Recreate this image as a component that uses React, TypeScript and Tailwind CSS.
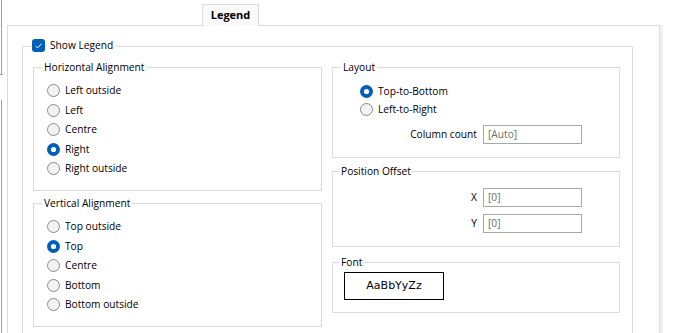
import React from "react";

const Radio = ({ checked }: { checked?: boolean }) =>
  checked ? (
    <svg width="13" height="13" viewBox="0 0 13 13" className="shrink-0">
      <circle cx="6.5" cy="6.5" r="6.5" fill="#005fb8" />
      <circle cx="6.5" cy="6.5" r="2.6" fill="#ffffff" />
    </svg>
  ) : (
    <svg width="13" height="13" viewBox="0 0 13 13" className="shrink-0">
      <circle cx="6.5" cy="6.5" r="6" fill="#f3f3f3" stroke="#8a8a8a" strokeWidth="1" />
    </svg>
  );

const RadioRow = ({ label, checked, h }: { label: string; checked?: boolean; h: string }) => (
  <div className={`flex items-center gap-[5px] ${h}`}>
    <Radio checked={checked} />
    <span className="leading-[13px]">{label}</span>
  </div>
);

const Input = ({ value }: { value: string }) => (
  <div className="flex h-[19px] w-[99px] items-center border border-[#a8a8a8] bg-white pl-[4px] text-[#6d6d6d]">
    {value}
  </div>
);

export default function App() {
  return (
    <div className="flex h-[333px] w-[675px] overflow-hidden bg-white font-['Open_Sans',sans-serif] text-[10.2px] text-black">
      {/* left window edge */}
      <div className="flex h-full w-[7px] shrink-0 flex-col">
        <div className="ml-[1px] h-[74px] w-px shrink-0 bg-[#a0a0a0]" />
        <div className="h-px w-[3px] shrink-0 bg-[#a0a0a0]" />
        <div className="h-[25px] shrink-0" />
        <div className="ml-[1px] w-px flex-1 bg-[#a0a0a0]" />
      </div>

      {/* main tab control */}
      <div className="flex w-[653px] shrink-0 flex-col">
        <div className="flex h-[25px] shrink-0 items-end pl-[195px]">
          <div className="relative z-10 -mb-px flex h-[22px] w-[57px] items-center justify-center border border-b-0 border-[#dcdcdc] bg-[#f9f9f9] pb-[1px] text-[11px] font-bold">
            Legend
          </div>
        </div>
        <div className="flex-1 border-x border-t border-[#dcdcdc] pl-[14px] pt-[13px]">
          <fieldset className="w-[611px] border border-[#dcdcdc]">
            <legend className="ml-[8px] flex h-[15px] items-start gap-[5px] pl-[1px] pr-[3px]">
              <svg width="13" height="13" viewBox="0 0 13 13" className="shrink-0">
                <rect x="0" y="0" width="13" height="13" rx="3" fill="#005fb8" />
                <path d="M3.6 6.9 L5.6 8.9 L9.6 4.6" fill="none" stroke="#ffffff" strokeWidth="1" />
              </svg>
              <span className="leading-[13px]">Show Legend</span>
            </legend>
            <div className="flex gap-[10px] pl-[10px] pt-[6px] pb-[20px]">
              {/* left column */}
              <div className="flex w-[289px] flex-col">
                <fieldset className="border border-[#dcdcdc]">
                  <legend className="ml-[8px] h-[15px] px-[2px] leading-[15px]">Horizontal Alignment</legend>
                  <div className="flex flex-col pl-[13px] pt-[6px] pb-[11.5px]">
                    <RadioRow h="h-[19.5px]" label="Left outside" />
                    <RadioRow h="h-[19.5px]" label="Left" />
                    <RadioRow h="h-[19.5px]" label="Centre" />
                    <RadioRow h="h-[19.5px]" label="Right" checked />
                    <RadioRow h="h-[19.5px]" label="Right outside" />
                  </div>
                </fieldset>
                <fieldset className="mt-[5px] border border-[#dcdcdc]">
                  <legend className="ml-[8px] h-[15px] px-[2px] leading-[15px]">Vertical Alignment</legend>
                  <div className="flex flex-col pl-[13px] pt-[6px] pb-[11.5px]">
                    <RadioRow h="h-[19.5px]" label="Top outside" />
                    <RadioRow h="h-[19.5px]" label="Top" checked />
                    <RadioRow h="h-[19.5px]" label="Centre" />
                    <RadioRow h="h-[19.5px]" label="Bottom" />
                    <RadioRow h="h-[19.5px]" label="Bottom outside" />
                  </div>
                </fieldset>
              </div>

              {/* right column */}
              <div className="flex w-[288px] flex-col">
                <fieldset className="border border-[#dcdcdc]">
                  <legend className="ml-[8px] h-[15px] px-[2px] leading-[15px]">Layout</legend>
                  <div className="flex flex-col pt-[7px] pb-[13px]">
                    <div className="flex flex-col pl-[27px]">
                      <RadioRow h="h-[18px]" label="Top-to-Bottom" checked />
                      <RadioRow h="h-[18px]" label="Left-to-Right" />
                    </div>
                    <div className="mt-[7px] flex items-center justify-end gap-[6px] pr-[37px]">
                      <span>Column count</span>
                      <Input value="[Auto]" />
                    </div>
                  </div>
                </fieldset>
                <fieldset className="mt-[6px] border border-[#dcdcdc]">
                  <legend className="ml-[6px] h-[15px] pl-[2px] leading-[15px]">Position Offset</legend>
                  <div className="flex flex-col pt-[9px] pb-[13px] pr-[37px]">
                    <div className="flex items-center justify-end gap-[6px]">
                      <span>X</span>
                      <Input value="[0]" />
                    </div>
                    <div className="mt-[7px] flex items-center justify-end gap-[6px]">
                      <span>Y</span>
                      <Input value="[0]" />
                    </div>
                  </div>
                </fieldset>
                <fieldset className="mt-[8px] border border-[#dcdcdc]">
                  <legend className="ml-[6px] h-[15px] pl-[2px] leading-[15px]">Font</legend>
                  <div className="pl-[11px] pt-[2px] pb-[12px]">
                    <div className="flex h-[28px] w-[100px] items-center justify-center border border-black font-['DejaVu_Sans',sans-serif] text-[11px]">
                      AaBbYyZz
                    </div>
                  </div>
                </fieldset>
              </div>
            </div>
          </fieldset>
        </div>
      </div>

      {/* right edge shadow */}
      <div className="flex w-[3px] shrink-0 flex-col pt-[25px]">
        <div className="flex-1 bg-[#f0f0f0]" />
      </div>
    </div>
  );
}
